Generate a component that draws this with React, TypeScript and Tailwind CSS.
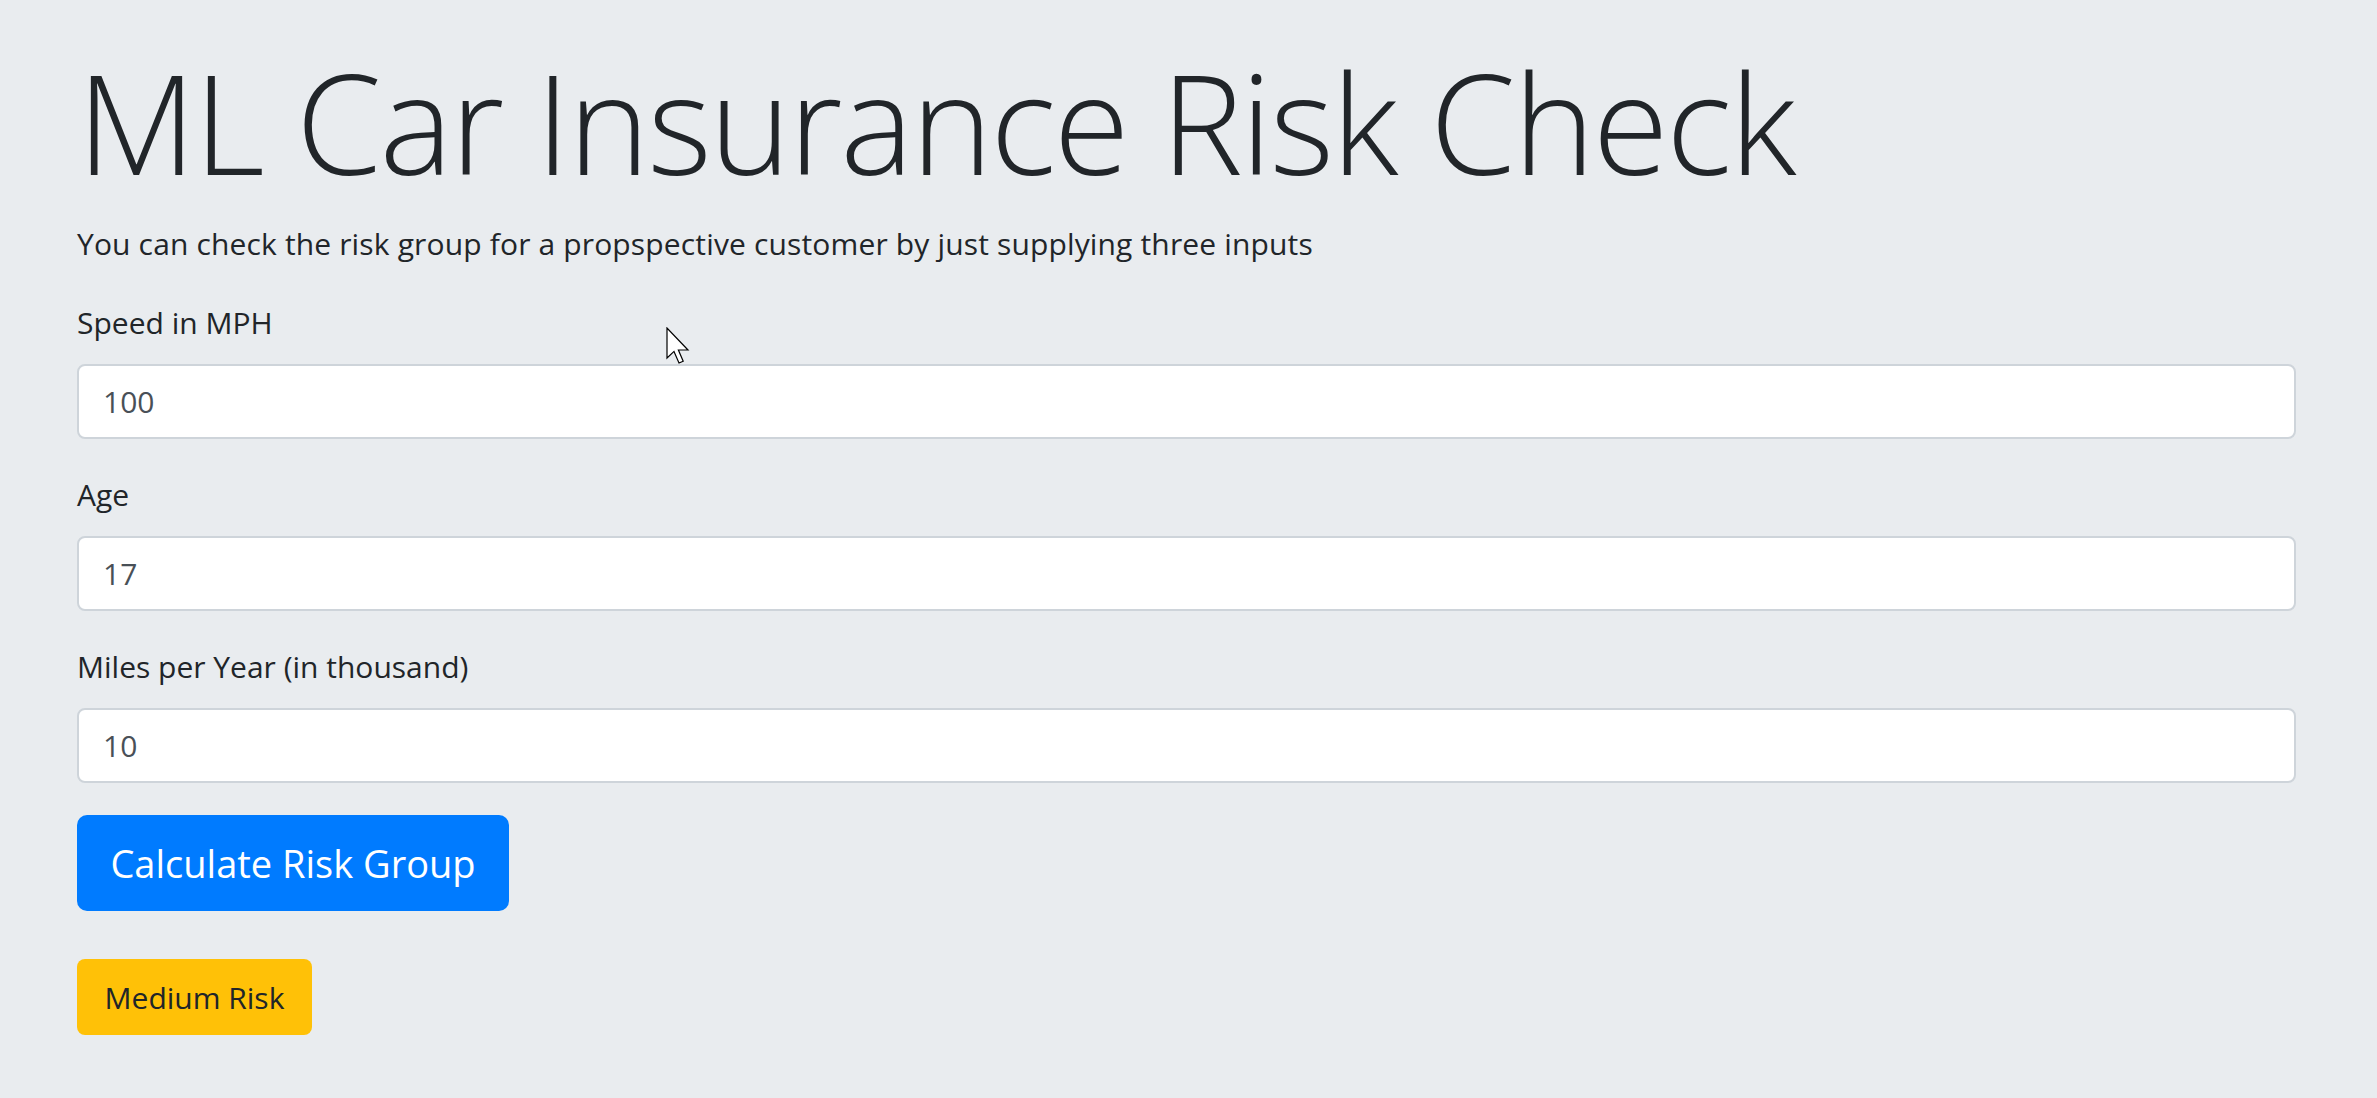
import { useState } from "react";

function Field({ label, value }: { label: string; value: string }) {
  const [val, setVal] = useState(value);
  return (
    <div className="mb-[32px]">
      <label className="block text-[30px] leading-[48px] mb-[17px]">{label}</label>
      <input
        type="text"
        value={val}
        onChange={(e) => setVal(e.target.value)}
        className="block w-full h-[75px] bg-white border-2 border-[#ced4da] rounded-[8px] pl-[24px] pr-[24px] text-[30px] text-[#495057] outline-none"
      />
    </div>
  );
}

export default function App() {
  return (
    <div className="relative min-h-screen bg-[#e9ecef] pt-[35px] pl-[77px] pr-[81px] pb-[40px] font-['Open_Sans',sans-serif] text-[#212529]">
      <h1 className="text-[138px] font-light leading-[173px] tracking-[-0.016em] mb-[12px]">
        ML Car Insurance Risk Check
      </h1>
      <p className="text-[30px] leading-[48px] mb-[31px] tracking-[0.005em]">
        You can check the risk group for a propspective customer by just supplying three inputs
      </p>
      <form onSubmit={(e) => e.preventDefault()}>
        <Field label="Speed in MPH" value="100" />
        <Field label="Age" value="17" />
        <Field label="Miles per Year (in thousand)" value="10" />
        <button
          type="submit"
          className="block w-[432px] h-[96px] bg-[#007bff] text-white text-[38px] rounded-[10px]"
        >
          Calculate Risk Group
        </button>
        <div className="mt-[48px] w-[235px] h-[76px] flex items-center justify-center bg-[#ffc107] rounded-[8px] text-[30px] text-[#212529]">
          Medium Risk
        </div>
      </form>

      {/* mouse pointer from the screenshot */}
      <svg className="absolute left-[666px] top-[327px]" width="26" height="40" viewBox="0 0 13 20">
        <path
          d="M0.5 0.5 L0.5 15.5 L4 12.2 L6.5 18 L8.6 17.1 L6.2 11.5 L11 11.5 Z"
          fill="white"
          stroke="black"
          strokeWidth="0.6"
          strokeLinejoin="miter"
        />
      </svg>
    </div>
  );
}
